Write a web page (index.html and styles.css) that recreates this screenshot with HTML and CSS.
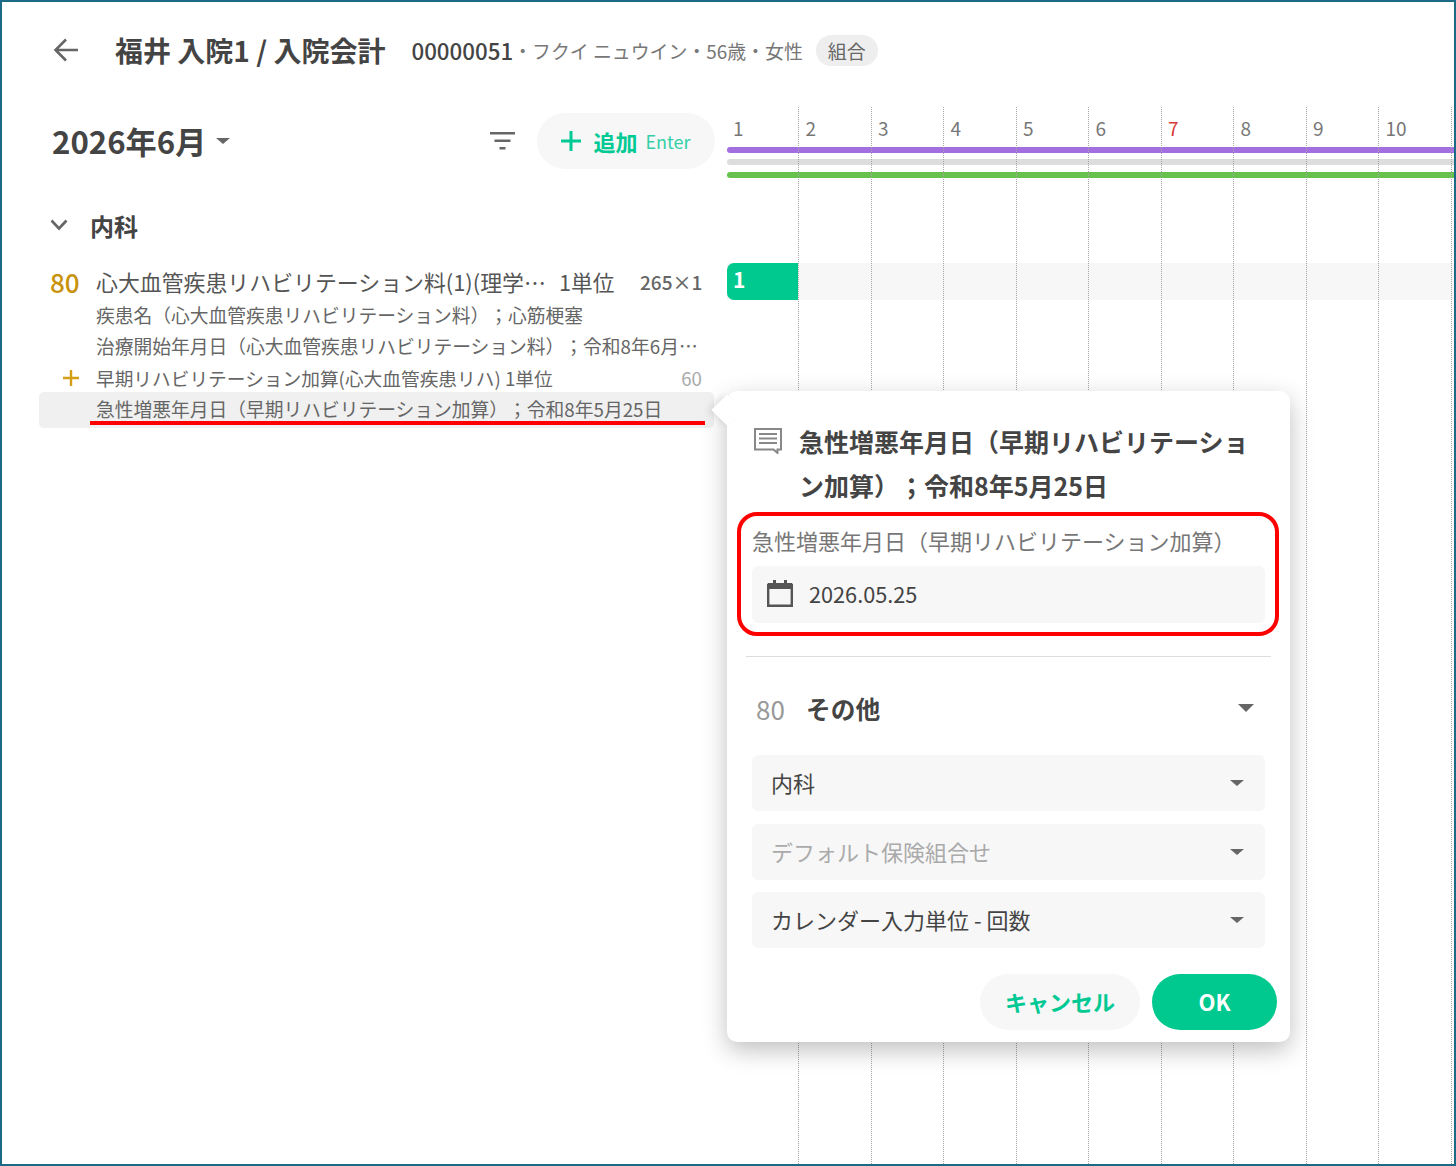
FILE: index.html
```html
<!DOCTYPE html>
<html lang="ja">
<head>
    <meta charset="UTF-8">
    <title>入院会計</title>
    <link rel="stylesheet" href="styles.css">
</head>
<body>
    <div class="frame">
        <header class="header">
            <svg class="back-icon" width="28" height="28" viewBox="0 0 28 28"><path d="M26 14H4M14 3.500 3.500 14 14 24.500" fill="none" stroke="#666" stroke-width="2.600"/></svg>
            <h1 class="title">福井 入院1 / 入院会計</h1>
            <span class="patient-id">00000051</span>
            <span class="patient-info">・フクイ ニュウイン・56歳・女性</span>
            <span class="chip">組合</span>
        </header>

        <div class="main">
            <section class="left">
                <div class="month-row">
                    <div class="month">2026年6月</div>
                    <span class="caret month-caret"></span>
                    <svg class="filter-icon" width="25" height="18" viewBox="0 0 25 18"><path d="M0 0h25v2.500H0zM4.500 7.500h16V10h-16zM9.500 15h6v2.500h-6z" fill="#666"/></svg>
                    <button class="add-btn">
                        <svg width="20" height="20" viewBox="0 0 20 20"><path d="M8.500 0h3v8.500H20v3h-8.500V20h-3v-8.500H0v-3h8.500z" fill="#00c994"/></svg>
                        <span class="add-label">追加</span>
                        <span class="add-key">Enter</span>
                    </button>
                </div>

                <div class="group-title">
                    <svg width="18" height="12" viewBox="0 0 18 12"><path d="M1.500 1.500 9 9.500l7.500-8" fill="none" stroke="#666" stroke-width="2.600"/></svg>
                    <span>内科</span>
                </div>

                <div class="order">
                    <div class="order-main">
                        <span class="order-code">80</span>
                        <span class="order-name">心大血管疾患リハビリテーション料(1)(理学…</span>
                        <span class="order-unit">1単位</span>
                        <span class="order-point">265×1</span>
                    </div>
                    <div class="order-sub">疾患名（心大血管疾患リハビリテーション料）；心筋梗塞</div>
                    <div class="order-sub">治療開始年月日（心大血管疾患リハビリテーション料）；令和8年6月…</div>
                    <div class="order-sub order-add">
                        <svg class="order-plus" width="16" height="16" viewBox="0 0 16 16"><path d="M6.800 0h2.400v6.800H16v2.400H9.200V16H6.800V9.200H0V6.800h6.800z" fill="#d69e17"/></svg>
                        <span>早期リハビリテーション加算(心大血管疾患リハ) 1単位</span>
                        <span class="order-add-point">60</span>
                    </div>
                    <div class="order-sub order-selected">急性増悪年月日（早期リハビリテーション加算）；令和8年5月25日</div>
                </div>
            </section>

            <section class="calendar">
                <div class="cal-lines">
                    <div class="cal-line"></div><div class="cal-line"></div><div class="cal-line"></div><div class="cal-line"></div><div class="cal-line"></div>
                    <div class="cal-line"></div><div class="cal-line"></div><div class="cal-line"></div><div class="cal-line"></div><div class="cal-line"></div>
                </div>
                <div class="cal-days">
                    <span class="cal-day">1</span><span class="cal-day">2</span><span class="cal-day">3</span><span class="cal-day">4</span><span class="cal-day">5</span>
                    <span class="cal-day">6</span><span class="cal-day holiday">7</span><span class="cal-day">8</span><span class="cal-day">9</span><span class="cal-day">10</span>
                </div>
                <div class="cal-bar bar-purple"></div>
                <div class="cal-bar bar-gray"></div>
                <div class="cal-bar bar-green"></div>
                <div class="cal-row">
                    <div class="cal-cell">1</div>
                </div>
            </section>
        </div>

        <div class="popover">
            <div class="pop-title">
                <svg class="pop-icon" width="28" height="26" viewBox="0 0 28 26"><path d="M1 1h26v20.500h-3.500V25l-4-3.500H1z" fill="none" stroke="#888" stroke-width="2"/><path d="M5 6h18M5 10.500h18M5 15h18" stroke="#888" stroke-width="2.200"/></svg>
                <h2>急性増悪年月日（早期リハビリテーション加算）；令和8年5月25日</h2>
            </div>
            <label class="field-label">急性増悪年月日（早期リハビリテーション加算）</label>
            <div class="date-input">
                <svg class="date-icon" width="26" height="28" viewBox="0 0 26 28"><path d="M1.200 6h23.600v20.800H1.200z" fill="none" stroke="#555" stroke-width="2.400"/><path d="M1 4h24v6H1z" fill="#555"/><path d="M6 1h3v4H6zM17 1h3v4h-3z" fill="#555"/></svg>
                <span>2026.05.25</span>
            </div>
            <hr class="divider">
            <div class="other-row">
                <span class="other-code">80</span>
                <span class="other-name">その他</span>
                <span class="caret other-caret"></span>
            </div>
            <div class="select"><span class="select-text">内科</span><span class="caret"></span></div>
            <div class="select placeholder"><span class="select-text">デフォルト保険組合せ</span><span class="caret"></span></div>
            <div class="select"><span class="select-text">カレンダー入力単位 - 回数</span><span class="caret"></span></div>
            <div class="actions">
                <button class="btn-cancel">キャンセル</button>
                <button class="btn-ok">OK</button>
            </div>
        </div>

        <div class="mark-line"></div>
        <div class="mark-box"></div>
    </div>
</body>
</html>
```

FILE: styles.css
```css
* {
    box-sizing: border-box;
}

body {
    margin: 0;
    background: #fff;
    color: #444;
    font-family: "Noto Sans CJK JP", "Noto Sans", sans-serif;
    text-spacing-trim: space-all;
}

.frame {
    position: relative;
    width: 1456px;
    height: 1166px;
    border: 2px solid #1d6a87;
    overflow: hidden;
}

.header {
    display: flex;
    align-items: center;
    height: 105px;
    padding: 0 0 9px 50px;
    white-space: nowrap;
}

.back-icon {
    margin-right: 35px;
}

.title {
    margin: 0 26px 0 0;
    font-size: 28px;
    font-weight: 700;
    color: #444;
}

.patient-id {
    font-size: 22.300px;
    font-weight: 500;
}

.patient-info {
    margin-right: 13px;
    font-size: 18.900px;
    color: #777;
}

.chip {
    padding: 0 12px;
    height: 31px;
    line-height: 31px;
    border-radius: 16px;
    background: #eee;
    font-size: 19px;
    color: #666;
}

.main {
    display: flex;
}

.left {
    flex: 0 0 725px;
    min-width: 0;
}

.month-row {
    display: flex;
    align-items: center;
    margin-top: 6px;
    padding-left: 50px;
    height: 56px;
}

.month {
    margin-top: -2px;
    font-size: 31.200px;
    font-weight: 700;
    color: #444;
}

.caret {
    flex: none;
    width: 0;
    height: 0;
    border-left: 7px solid transparent;
    border-right: 7px solid transparent;
    border-top: 6px solid #666;
}

.month-caret {
    margin-left: 10px;
    margin-right: 260px;
}

.filter-icon {
    margin-right: 22px;
}

.add-btn {
    display: flex;
    flex: none;
    align-items: center;
    width: 178px;
    height: 56px;
    padding: 0 0 0 24px;
    border: 0;
    border-radius: 28px;
    background: #f7f7f7;
    font-family: inherit;
}

.add-label {
    margin-left: 12px;
    font-size: 22px;
    font-weight: 700;
    color: #00c994;
}

.add-key {
    margin-left: 8px;
    font-size: 18px;
    color: #33d0a8;
}

.group-title {
    display: flex;
    align-items: center;
    margin-top: 32px;
    padding-left: 48px;
    height: 48px;
    font-size: 24px;
    font-weight: 700;
}

.group-title span {
    margin-left: 22px;
}

.order {
    margin: 14.500px 13px 0 37px;
}

.order-main {
    display: flex;
    align-items: center;
    height: 35px;
    padding: 0 12px 0 11px;
    white-space: nowrap;
    color: #555;
}

.order-code {
    flex: none;
    width: 46px;
    font-size: 26px;
    font-weight: 500;
    color: #c8920a;
}

.order-name {
    flex: none;
    font-size: 21.900px;
    width: 463px;
}

.order-unit {
    flex: none;
    width: 81px;
    font-size: 21.700px;
}

.order-point {
    margin-left: auto;
    font-size: 19px;
    font-weight: 500;
    color: #666;
}

.order-sub {
    display: flex;
    align-items: center;
    height: 31px;
    padding: 0 12px 0 57px;
    font-size: 18.750px;
    color: #666;
    white-space: nowrap;
}

.order-add {
    position: relative;
    margin-top: 1px;
    font-size: 18.700px;
}

.order-plus {
    position: absolute;
    left: 24px;
    top: 8px;
}

.order-add-point {
    margin-left: auto;
    color: #aaa;
}

.order-selected {
    height: 36px;
    margin-top: -0.500px;
    padding-bottom: 3px;
    border-radius: 5px;
    background: #f0f0f0;
}

.calendar {
    position: relative;
    flex: 1;
    min-width: 0;
    height: 1059px;
}

.cal-lines {
    position: absolute;
    inset: 0 0 0 -0.500px;
    display: flex;
}

.cal-line {
    flex: 0 0 72.500px;
    border-right: 1px dotted #a5a5a5;
}

.cal-days {
    display: flex;
    height: 40px;
    padding-bottom: 5px;
    align-items: flex-end;
}

.cal-day {
    flex: 0 0 72.500px;
    padding-left: 6px;
    font-size: 19px;
    line-height: 28px;
    color: #777;
}

.holiday {
    color: #d83a3a;
}

.cal-bar {
    height: 6px;
    border-radius: 3px 0 0 3px;
}

.bar-purple {
    background: #a36ee0;
}

.bar-gray {
    margin-top: 6px;
    background: #ddd;
}

.bar-green {
    margin-top: 7px;
    background: #66c24d;
}

.cal-row {
    margin-top: 85px;
    height: 37px;
    background: #f7f7f7;
}

.cal-cell {
    width: 71px;
    height: 37px;
    padding-left: 6px;
    border-radius: 7px 0 0 7px;
    background: #00c98f;
    color: #fff;
    font-size: 21px;
    font-weight: 700;
    line-height: 33px;
}

.popover {
    position: absolute;
    left: 725px;
    top: 389px;
    width: 563px;
    height: 651px;
    padding: 28px 25px 0;
    border-radius: 10px;
    background: #fff;
    box-shadow: 0 8px 24px rgba(0, 0, 0, 0.25);
}

.popover::before {
    content: "";
    position: absolute;
    left: -11px;
    top: 8px;
    width: 22px;
    height: 22px;
    background: #fff;
    transform: rotate(45deg);
    box-shadow: -3px 3px 6px rgba(0, 0, 0, 0.08);
}

.pop-title {
    position: relative;
    display: flex;
    align-items: flex-start;
}

.pop-icon {
    flex: none;
    margin: 9px 17px 0 2px;
}

.pop-title h2 {
    margin: 0;
    font-size: 25px;
    line-height: 44px;
    font-weight: 700;
    color: #444;
}

.field-label {
    display: block;
    margin-top: 17px;
    font-size: 22px;
    line-height: 32px;
    color: #777;
}

.date-input {
    display: flex;
    align-items: center;
    gap: 16px;
    height: 57px;
    margin-top: 10px;
    padding: 0 0 2px 15px;
    border-radius: 6px;
    background: #f7f7f7;
    font-size: 21.700px;
}

.date-icon {
    margin-top: -1px;
}

.divider {
    height: 1px;
    margin: 33px -6px 0;
    border: 0;
    background: #ddd;
}

.other-row {
    display: flex;
    align-items: center;
    height: 40px;
    margin-top: 31px;
    padding-left: 4px;
}

.other-code {
    width: 50px;
    font-size: 26px;
    color: #999;
}

.other-name {
    font-size: 24.700px;
    font-weight: 700;
}

.other-caret {
    margin-left: auto;
    margin-right: 11px;
    border-left-width: 8px;
    border-right-width: 8px;
    border-top-width: 8px;
}

.select {
    display: flex;
    align-items: center;
    justify-content: space-between;
    height: 56px;
    margin-top: 12.500px;
    padding: 0 21px 0 19px;
    border-radius: 6px;
    background: #f7f7f7;
    font-size: 22px;
}

.select-text {
    margin-top: -2px;
}

.other-row + .select {
    margin-top: 27px;
}

.placeholder {
    color: #aaa;
}

.actions {
    display: flex;
    justify-content: flex-end;
    gap: 12px;
    margin: 26px -12px 0 0;
}

.actions button {
    height: 56px;
    padding-bottom: 3px;
    border: 0;
    border-radius: 28px;
    font-family: inherit;
    font-size: 22px;
    font-weight: 700;
}

.btn-cancel {
    width: 160px;
    background: #f7f7f7;
    color: #00c994;
}

.btn-ok {
    width: 125px;
    background: #00c98f;
    color: #fff;
}

.mark-line {
    position: absolute;
    left: 88px;
    top: 419px;
    width: 615px;
    height: 4px;
    background: #f00;
}

.mark-box {
    position: absolute;
    left: 735px;
    top: 510px;
    width: 542px;
    height: 124px;
    border: 4px solid #f00;
    border-radius: 20px;
}
```
